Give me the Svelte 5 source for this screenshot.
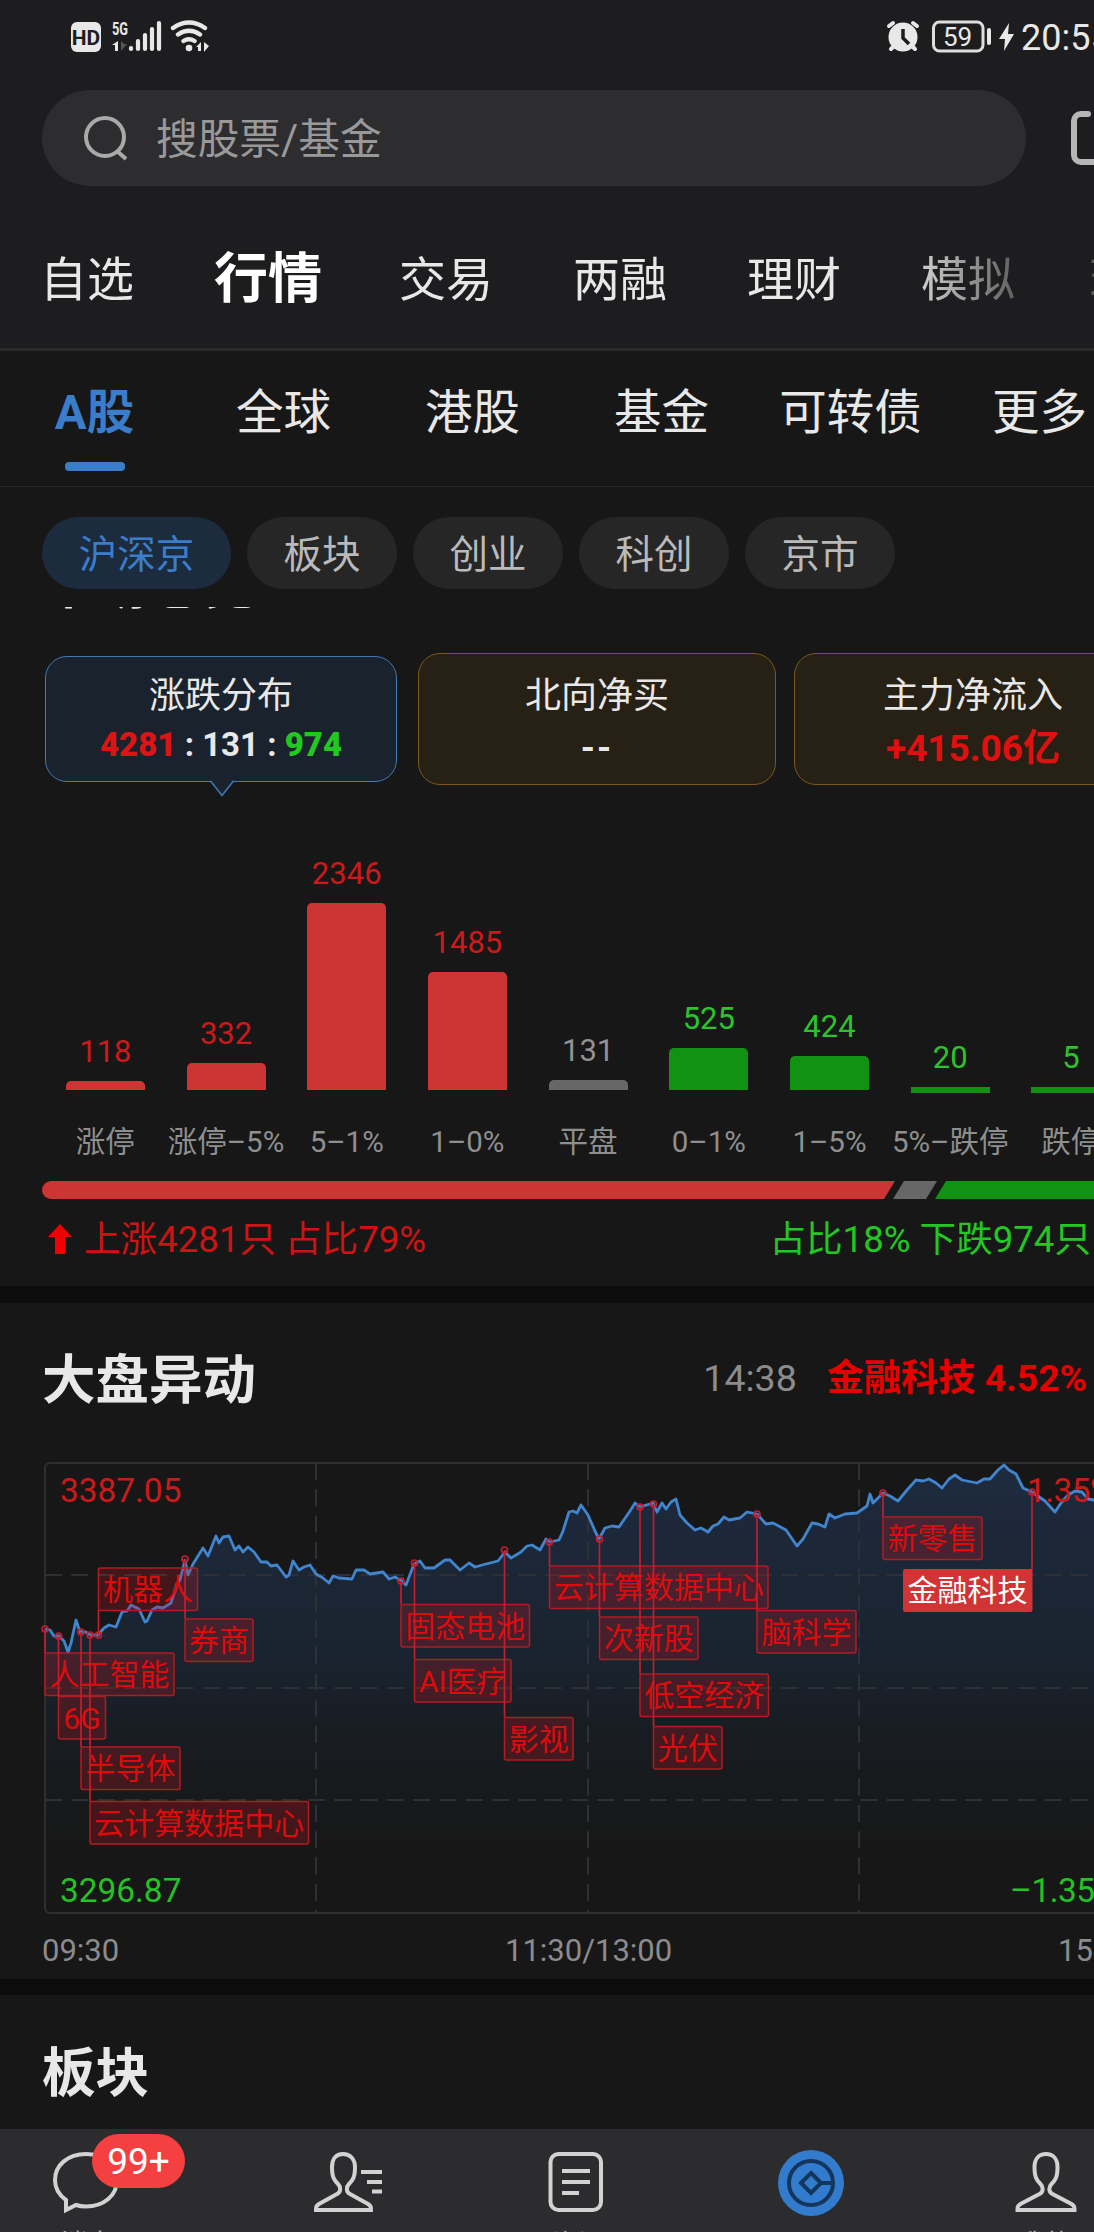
<script lang="ts">
  const tabs = ["自选", "行情", "交易", "两融", "理财", "模拟", "现货"];
  const markets = ["A股", "全球", "港股", "基金", "可转债", "更多"];
  const boards = ["沪深京", "板块", "创业", "科创", "京市"];

  const buckets = [
    { label: "涨停", count: 118, height: 9, type: "up" },
    { label: "涨停–5%", count: 332, height: 27, type: "up" },
    { label: "5–1%", count: 2346, height: 187, type: "up" },
    { label: "1–0%", count: 1485, height: 118, type: "up" },
    { label: "平盘", count: 131, height: 10, type: "flat" },
    { label: "0–1%", count: 525, height: 42, type: "down" },
    { label: "1–5%", count: 424, height: 34, type: "down" },
    { label: "5%–跌停", count: 20, height: 6, type: "down low" },
    { label: "跌停", count: 5, height: 6, type: "down low" },
  ];

  const line =
    "45,166 50,167 54,173 59,173 64,178 68,189 71,180 76,157 80,169 86,169 90,172 98,172 104,165 109,162 116,164 122,149 127,148 131,142 139,146 145,159 147,158 152,147 157,144 163,145 171,140 177,120 180,117 185,97 188,112 193,101 203,85 208,93 216,73 219,80 223,74 229,73 235,87 239,83 243,89 248,84 254,89 261,99 267,99 271,103 277,102 286,114 289,112 293,98 299,107 304,104 310,102 316,111 323,115 329,120 333,113 339,115 352,116 356,107 364,107 370,111 383,109 389,116 395,114 402,118 406,122 414,101 420,98 425,105 434,105 445,97 450,97 460,107 469,100 475,104 486,101 498,98 505,89 511,95 521,89 527,83 532,82 540,87 546,76 550,79 559,77 563,68 569,49 573,48 577,50 581,42 588,52 595,68 599,76 605,65 612,63 619,64 630,48 635,40 640,44 653,40 657,49 662,40 666,46 671,39 676,36 680,52 687,60 695,67 701,65 708,69 713,63 718,61 724,54 729,57 740,55 747,49 757,51 766,61 773,60 786,67 797,83 803,76 812,60 818,61 825,64 829,51 835,55 845,51 857,50 867,43 870,31 873,40 883,30 890,33 898,38 907,27 916,17 923,18 929,16 936,20 942,25 949,16 955,12 962,17 977,20 984,16 990,16 998,7 1004,2 1009,7 1016,11 1023,25 1032,29 1045,38 1055,49 1061,40 1068,32 1075,28 1082,29 1088,36 1094,37 1130,34";

  const tags = [
    { name: "机器人", x: 98.5, y: 105, w: 99, pin: 172 },
    { name: "人工智能", x: 45, y: 190, w: 129, pin: 166 },
    { name: "6G", x: 58.5, y: 233.5, w: 47, pin: 173 },
    { name: "半导体", x: 81, y: 284, w: 99, pin: 169 },
    { name: "云计算数据中心", x: 90, y: 338.5, w: 218.5, pin: 172 },
    { name: "券商", x: 185, y: 156, w: 68, pin: 96 },
    { name: "固态电池", x: 401, y: 141.5, w: 128.5, pin: 118 },
    { name: "AI医疗", x: 414.5, y: 196.5, w: 96.5, pin: 100 },
    { name: "影视", x: 504.5, y: 254.5, w: 68.5, pin: 87 },
    { name: "云计算数据中心", x: 549.5, y: 103, w: 218.5, pin: 79 },
    { name: "次新股", x: 599.5, y: 154, w: 98.5, pin: 76 },
    { name: "低空经济", x: 640, y: 211, w: 128.5, pin: 44 },
    { name: "光伏", x: 653.5, y: 263.5, w: 68.5, pin: 41 },
    { name: "脑科学", x: 757, y: 147.5, w: 99, pin: 51 },
    { name: "新零售", x: 883, y: 54, w: 99, pin: 30 },
  ];
</script>

<div class="page">
  <header>
    <div class="status">
      <svg class="signals" width="150" height="40" viewBox="66 16 150 40">
        <rect x="71" y="22" width="30" height="30" rx="6" fill="#e8e8e8" />
        <text x="86" y="44.500" class="hd">HD</text>
        <text x="112" y="35" class="gen" textLength="16" lengthAdjust="spacingAndGlyphs">5G</text>
        <path d="M118 41v10h-3v-6h-3z" fill="#e8e8e8" />
        <path d="M121 41v10l6-7h-3z" fill="#555" />
        <g stroke="#e8e8e8" stroke-width="4.2" stroke-linecap="round">
          <path d="M131 48v1M138 41v8M145 35v14M152 29v20M159 23v26" />
        </g>
        <g fill="none" stroke="#e8e8e8" stroke-width="4.4" stroke-linecap="round">
          <path d="M173 28q16-11 32 0M178 34.500q11-7.500 22 0M183.500 41q5.500-3.500 11 0" />
        </g>
        <circle cx="189" cy="48" r="3.300" fill="#e8e8e8" />
        <path d="M201 42v9h-3v-4h-2zM204 42l5 4-5 6z" fill="#e8e8e8" />
      </svg>
      <svg class="power" width="134" height="40" viewBox="882 16 134 40">
        <circle cx="902" cy="37" r="14.500" fill="#e8e8e8" />
        <g stroke="#e8e8e8" stroke-width="4" stroke-linecap="round">
          <path d="M888 26l4-3M916 26l-4-3M890 49l4-4M914 49l-4-4" />
        </g>
        <path d="M902 29v9l6 6" fill="none" stroke="#1d1d1f" stroke-width="3.500" />
        <rect x="932.500" y="22" width="49.500" height="29" rx="6" fill="none" stroke="#dedede" stroke-width="3" />
        <text x="956.500" y="46" class="charge">59</text>
        <rect x="986" y="28" width="4" height="17" rx="2" fill="#e8e8e8" />
        <path d="M1008 23l-10 16h6l-1 12 10-17h-6z" fill="#e8e8e8" />
      </svg>
      <span class="clock">20:55</span>
    </div>

    <div class="search-row">
      <div class="search">
        <svg width="46" height="46" viewBox="0 0 46 46" fill="none" stroke="#a9a9a9" stroke-width="4">
          <circle cx="22" cy="22" r="19" />
          <path d="M34 36l9 8" />
        </svg>
        <span>搜股票/基金</span>
      </div>
      <svg class="scan" width="54" height="56" viewBox="0 0 54 56" fill="none" stroke="#b6b6b6" stroke-width="6" stroke-linecap="round">
        <path d="M18 4h-7a7 7 0 0 0-7 7v34a7 7 0 0 0 7 7h36" />
      </svg>
    </div>

    <nav class="tabs">
      {#each tabs as tab, i}
        <span class:active={i === 1}>{tab}</span>
      {/each}
    </nav>
  </header>

  <nav class="markets">
    {#each markets as market, i}
      <span class:active={i === 0}>{market}</span>
    {/each}
  </nav>

  <div class="boards">
    {#each boards as board, i}
      <span class:active={i === 0}>{board}</span>
    {/each}
  </div>

  <section class="overview">
    <div class="clip"><h2>市场总览</h2></div>

    <div class="cards">
      <div class="card selected">
        <p>涨跌分布</p>
        <strong class="ratio"><b class="red">4281</b> : 131 : <b class="green">974</b></strong>
        <svg class="pointer" width="26" height="18" viewBox="0 0 26 18">
          <path d="M1 0L13 15 25 0" fill="#1a222d" />
          <path d="M1 1.500h1L13 15.500 24 1.500h1" fill="none" stroke="#427ab5" stroke-width="1.500" />
        </svg>
      </div>
      <div class="card">
        <p>北向净买</p>
        <strong class="dashes">--</strong>
      </div>
      <div class="card">
        <p>主力净流入</p>
        <strong class="red inflow">+415.06亿</strong>
      </div>
    </div>

    <div class="histogram">
      {#each buckets as bucket}
        <div class="bucket {bucket.type}">
          <span class="count">{bucket.count}</span>
          <div class="bar" style="height: {bucket.height}px"></div>
          <span class="label">{bucket.label}</span>
        </div>
      {/each}
    </div>

    <svg class="split" width="1094" height="18" viewBox="0 0 1094 18">
      <path d="M51 0H895L884 18H51a9 9 0 0 1 0-18z" fill="#cd3434" />
      <path d="M904 0h33l-11 18h-33z" fill="#676767" />
      <path d="M946 0h148v18H935z" fill="#129212" />
    </svg>

    <div class="totals">
      <svg width="24" height="30" viewBox="0 0 24 30"><path d="M12 0l12 13h-7v17H7V13H0z" fill="#f00000" /></svg>
      <span class="red">上涨4281只 占比79%</span>
      <span class="green">占比18% 下跌974只</span>
    </div>
  </section>

  <section class="movement">
    <div class="title-row">
      <h2>大盘异动</h2>
      <span class="time">14:38</span>
      <span class="hot">金融科技 4.52%</span>
    </div>

    <svg class="chart" width="1094" height="454" viewBox="0 -1 1094 454">
      <defs>
        <linearGradient id="fill" x1="0" y1="0" x2="0" y2="1">
          <stop offset="0" stop-color="#203049" stop-opacity="0.8" />
          <stop offset="0.45" stop-color="#1b2a3d" stop-opacity="0.65" />
          <stop offset="1" stop-color="#171717" stop-opacity="0" />
        </linearGradient>
      </defs>
      <polygon points="{line} 1130,430 45,430" fill="url(#fill)" />
      <rect x="45" y="0" width="1086" height="450" rx="5" class="frame" />
      <path d="M45 112h1086M45 225h1086M45 337h1086M316 0v450M588 0v450M859 0v450" class="grid" />
      <polyline points={line} class="index" />

      <text x="60" y="39" class="tick up">3387.05</text>
      <text x="60" y="439" class="tick down">3296.87</text>
      <text x="1027" y="39" class="tick up pct">1.35%</text>
      <text x="1010" y="439" class="tick down pct">–1.35%</text>

      {#each tags as tag}
        <rect x={tag.x} y={tag.y} width={tag.w} height="42.500" rx="2" class="tag" />
        <text x={tag.x + tag.w / 2} y={tag.y + 32} class="tag-name">{tag.name}</text>
      {/each}
      {#each tags as tag}
        <path d="M{tag.x} {tag.pin}V{tag.pin > tag.y ? tag.y + 42 : tag.y}" class="pin" />
        <circle cx={tag.x} cy={tag.pin} r="3" class="pin" />
      {/each}

      <path d="M1032 29V107" class="pin" />
      <circle cx="1032" cy="29" r="3" class="pin" />
      <rect x="903" y="106" width="129.500" height="43" rx="2" fill="#d03434" />
      <text x="967.500" y="138" class="tag-name current">金融科技</text>
    </svg>

    <div class="axis">
      <span>09:30</span>
      <span>11:30/13:00</span>
      <span>15:00</span>
    </div>
  </section>

  <section class="sectors">
    <h2>板块</h2>
  </section>

  <footer>
    <div class="item">
      <svg width="66" height="64" viewBox="53 2150 66 64">
        <path d="M86 2154c-18 0-31 11-31 26 0 9 4 15 11 20v10l10-5c3 1 6 1.500 10 1.500 18 0 31-11 31-26.500s-13-26-31-26z" />
      </svg>
      <span class="badge">99+</span>
      <small class="first">消息</small>
    </div>
    <div class="item">
      <svg width="70" height="64" viewBox="313 2150 70 64">
        <path d="M343 2154c-7 0-11 5-11 13 0 10 2 13 6 17 3 3 3 8-1 10l-18 10c-3 2-3 3-3 6h55c0-3 0-4-3-6l-18-10c-4-2-4-7-1-10 4-4 6-7 6-17 0-8-5-13-12-13z" />
        <path d="M361 2172h21M367 2182h15M372 2191.500h10" />
      </svg>
    </div>
    <div class="item">
      <svg width="56" height="64" viewBox="548 2150 56 64">
        <rect x="550.500" y="2154" width="50.500" height="56" rx="8" />
        <path d="M562 2171h28M562 2182h28M562 2193h17" />
      </svg>
      <small>资讯</small>
    </div>
    <div class="item">
      <svg width="66" height="66" viewBox="778 2149 66 66">
        <circle cx="811" cy="2182" r="33" fill="#337bcd" stroke="none" />
        <g stroke="#14355c">
          <circle cx="811" cy="2182" r="22" />
          <path d="M811 2172l10 10-10 10-10-10zM821 2182h12" />
        </g>
      </svg>
    </div>
    <div class="item">
      <svg width="62" height="64" viewBox="1015 2150 62 64">
        <path d="M1046 2154c-7 0-11.500 5-11.500 13 0 10 2 13 6 17 3 3 3 8-1 10l-19 10c-3 2-3 3-3 6h57c0-3 0-4-3-6l-19-10c-4-2-4-7-1-10 4-4 6-7 6-17 0-8-4.500-13-11.500-13z" />
      </svg>
      <small>我的</small>
    </div>
  </footer>
</div>

<style>
  :global(body) {
    background: #171717;
  }

  .page {
    width: 1094px;
    height: 2232px;
    overflow: hidden;
    display: flex;
    flex-direction: column;
    background: #171717;
    color: #e8e8e8;
    font-family: Roboto, "Noto Sans CJK SC", sans-serif;
    line-height: 1;
    white-space: nowrap;
  }

  h2,
  p {
    margin: 0;
  }

  h2 {
    font-size: 53.5px;
    font-weight: 700;
  }

  .red {
    color: #dc1414;
  }
  .green {
    color: #22c722;
  }

  header {
    height: 348px;
    flex: none;
    background: #1d1d1f;
    border-bottom: 3px solid #2a2a2b;
  }

  .status {
    height: 74px;
    padding: 16px 0 0 66px;
    box-sizing: border-box;
    display: flex;
  }
  .status svg {
    flex: none;
  }
  .power {
    margin-left: 667px;
  }
  .clock {
    font-size: 36px;
    margin: 4px 0 0 4px;
  }
  .hd {
    font-size: 21px;
    font-weight: 700;
    text-anchor: middle;
    fill: #1d1d1f;
  }
  .gen {
    font-size: 19px;
    font-weight: 700;
    fill: #e8e8e8;
  }
  .charge {
    font-size: 26px;
    text-anchor: middle;
    fill: #e8e8e8;
  }

  .search-row {
    display: flex;
    align-items: center;
    margin-top: 16px;
    padding-left: 42px;
  }
  .search {
    width: 984px;
    height: 96px;
    flex: none;
    box-sizing: border-box;
    padding-left: 41px;
    display: flex;
    align-items: center;
    gap: 27px;
    border-radius: 48px;
    background: #2d2d2f;
    color: #999;
    font-size: 41.7px;
  }
  .search span {
    padding-top: 4px;
  }
  .scan {
    margin-left: 44px;
    flex: none;
  }

  .tabs {
    display: grid;
    grid-template-columns: 172px 185px 174px 174px 174px 168px 100px;
    align-items: center;
    height: 54px;
    padding: 66px 0 0 42px;
    font-size: 47px;
    mask-image: linear-gradient(to right, #000 900px, rgba(0, 0, 0, 0.3) 1020px);
  }
  .tabs span:first-child {
    margin-left: -2px;
  }
  .tabs .active {
    padding-top: 1px;
    font-size: 54px;
    font-weight: 700;
    color: #fff;
  }

  .markets {
    display: grid;
    grid-template-columns: repeat(6, 189px);
    height: 136px;
    flex: none;
    box-sizing: border-box;
    padding-top: 39px;
    border-bottom: 1px solid #272727;
    font-size: 47.5px;
    text-align: center;
  }
  .markets .active {
    font-weight: 700;
    color: #3a7dcb;
  }
  .markets .active::after {
    content: "";
    display: block;
    width: 60px;
    height: 9px;
    margin: 24px auto 0;
    border-radius: 4px;
    background: #3a7dcb;
  }

  .boards {
    display: flex;
    gap: 16px;
    height: 120px;
    flex: none;
    box-sizing: border-box;
    padding: 30px 0 0 42px;
    font-size: 38.5px;
  }
  .boards span {
    width: 150px;
    height: 72px;
    line-height: 75px;
    border-radius: 36px;
    background: #262626;
    color: #bababa;
    text-align: center;
  }
  .boards .active {
    width: 189px;
    background: #1c2b3e;
    color: #3a7dcb;
  }

  .overview {
    height: 679px;
    flex: none;
    border-bottom: 17px solid #0c0c0c;
  }
  .clip {
    height: 46px;
    overflow: hidden;
    padding-left: 42px;
  }
  .clip h2 {
    margin-top: -48px;
  }

  .cards {
    display: flex;
    align-items: center;
    height: 132px;
    padding-left: 45px;
  }
  .card {
    width: 358px;
    height: 132px;
    flex: none;
    box-sizing: border-box;
    margin-right: 18px;
    padding-top: 24px;
    display: flex;
    flex-direction: column;
    align-items: center;
    border: 1.5px solid #7e571c;
    border-radius: 22px;
    background: #272015;
    font-size: 36px;
  }
  .card strong {
    margin-top: 16px;
  }
  .card .inflow {
    font-size: 37px;
    color: #e01010;
  }
  .card .dashes {
    letter-spacing: 2px;
  }
  .card.selected {
    position: relative;
    width: 352px;
    height: 126px;
    margin-right: 21px;
    padding-top: 21px;
    border-color: #427ab5;
    background: #1a222d;
  }
  .card .ratio {
    margin-top: 14px;
    font-size: 33px;
  }
  .pointer {
    position: absolute;
    left: 163px;
    bottom: -17px;
  }

  .histogram {
    display: grid;
    grid-template-columns: repeat(9, 120.7px);
    align-items: end;
    height: 372px;
    padding-left: 45px;
  }
  .bucket {
    display: flex;
    flex-direction: column;
    align-items: center;
  }
  .count {
    margin-bottom: 14px;
    font-size: 31px;
  }
  .bar {
    width: 79px;
    border-radius: 5px 5px 0 0;
  }
  .label {
    margin-top: 38px;
    font-size: 29.5px;
    color: #8f8f8f;
  }
  .up .count {
    color: #cc1a1a;
  }
  .up .bar {
    background: #cd3434;
  }
  .flat .count {
    color: #929292;
  }
  .flat .bar {
    background: #676767;
  }
  .down .count {
    color: #2bc42b;
  }
  .down .bar {
    background: #129212;
  }
  .low .bar {
    border-radius: 0;
  }
  .low .label {
    margin-top: 35px;
  }

  .split {
    display: block;
    margin-top: 24px;
  }
  .totals {
    display: flex;
    align-items: center;
    margin-top: 20px;
    padding: 0 3px 0 48px;
    font-size: 36.6px;
  }
  .totals span {
    padding-top: 3px;
  }
  .totals .red {
    margin-left: 12px;
    color: #cc1414;
  }
  .totals .green {
    margin-left: auto;
  }

  .movement {
    height: 676px;
    flex: none;
    border-bottom: 16px solid #0c0c0c;
  }
  .title-row {
    display: flex;
    align-items: center;
    height: 159px;
    box-sizing: border-box;
    padding: 0 7px 7px 42px;
  }
  .title-row h2 {
    margin-right: auto;
    padding-top: 4px;
  }
  .time {
    margin-right: 30px;
    font-size: 37.5px;
    color: #8c8c8c;
  }
  .hot {
    font-size: 37.2px;
    font-weight: 700;
    color: #e60000;
  }

  .chart {
    display: block;
  }
  .frame {
    fill: none;
    stroke: #2e2e2e;
    stroke-width: 2;
  }
  .grid {
    fill: none;
    stroke: #2d3034;
    stroke-width: 2;
    stroke-dasharray: 17 9.3;
  }
  .index {
    fill: none;
    stroke: #4285cf;
    stroke-width: 2.8;
    stroke-linejoin: round;
  }
  .tick {
    font-size: 33.4px;
  }
  .tick.pct {
    letter-spacing: -0.5px;
  }
  .tick.up {
    fill: #cc1a1a;
  }
  .tick.down {
    fill: #22c322;
  }
  .tag {
    fill: rgba(200, 20, 30, 0.25);
    stroke: #b01c22;
    stroke-width: 1.5;
  }
  .tag-name {
    font-size: 30px;
    text-anchor: middle;
    fill: #dc0c0c;
  }
  .tag-name.current {
    fill: #fff;
  }
  .pin {
    fill: none;
    stroke: #c41e2e;
    stroke-width: 1.7;
  }

  .axis {
    display: grid;
    grid-template-columns: 463px 163px 1fr;
    padding: 19px 0 0 42px;
    font-size: 31px;
    color: #8c8c8c;
  }
  .axis span:last-child {
    padding-left: 390px;
  }

  .sectors {
    height: 134px;
    flex: none;
    box-sizing: border-box;
    padding: 52px 0 0 42px;
  }

  footer {
    display: grid;
    grid-template-columns: 260px 235px 230px 237px 79px;
    height: 103px;
    flex: none;
    box-sizing: border-box;
    padding: 21px 0 0 53px;
    overflow: hidden;
    background: #2c2c2e;
  }
  .item {
    position: relative;
    display: flex;
    flex-direction: column;
    align-items: flex-start;
  }
  .item svg {
    flex: none;
    fill: none;
    stroke: #d2d2d2;
    stroke-width: 4;
  }
  .badge {
    position: absolute;
    left: 39px;
    top: -16px;
    width: 93px;
    height: 54px;
    line-height: 56px;
    border-radius: 27px;
    background: #f44040;
    color: #fff;
    font-size: 37px;
    text-align: center;
  }
  small {
    margin: 17px 0 0 4px;
    font-size: 26px;
    color: #aaa;
  }
  small.first {
    margin-left: 8px;
  }
</style>
